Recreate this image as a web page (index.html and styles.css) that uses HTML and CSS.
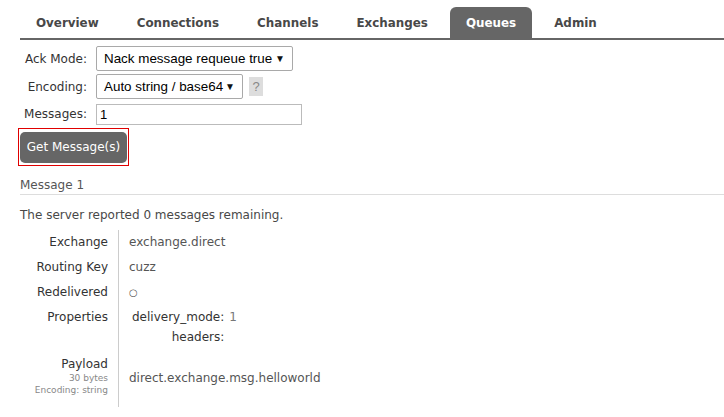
FILE: index.html
```html
<!DOCTYPE html>
<html>
<head>
<meta charset="utf-8">
<link rel="stylesheet" href="styles.css">
</head>
<body>
<div class="tabs">
  <div class="tab">Overview</div>
  <div class="tab">Connections</div>
  <div class="tab">Channels</div>
  <div class="tab">Exchanges</div>
  <div class="tab active">Queues</div>
  <div class="tab">Admin</div>
</div>
<div class="form">
  <label class="lbl">Ack Mode:</label>
  <div class="field"><span class="select sel-ack">Nack message requeue true<span class="arrow">&#9660;</span></span></div>
  <label class="lbl">Encoding:</label>
  <div class="field"><span class="select sel-enc">Auto string / base64<span class="arrow">&#9660;</span></span><span class="help">?</span></div>
  <label class="lbl">Messages:</label>
  <div class="field"><span class="input">1</span></div>
</div>
<div class="btn-wrap"><span class="btn">Get Message(s)</span></div>
<div class="msg-title">Message 1</div>
<p class="remaining">The server reported 0 messages remaining.</p>
<div class="details">
  <div class="k">Exchange</div><div class="v">exchange.direct</div>
  <div class="k">Routing Key</div><div class="v">cuzz</div>
  <div class="k">Redelivered</div><div class="v"><span class="circle">&#9675;</span></div>
  <div class="k">Properties</div>
  <div class="v props">
    <div class="pk">delivery_mode:</div><div class="pv">1</div>
    <div class="pk">headers:</div><div class="pv"></div>
  </div>
  <div class="k payload-k">Payload<small>30 bytes</small><small>Encoding: string</small></div>
  <div class="v payload-v">direct.exchange.msg.helloworld</div>
</div>
</body>
</html>
```
FILE: styles.css
```css
html, body {
  margin: 0;
  padding: 0;
  background: #fff;
  font-family: "DejaVu Sans", Verdana, sans-serif;
  font-size: 12px;
  color: #484848;
}
.tabs {
  display: flex;
  gap: 6px;
  margin-left: 20px;
  padding-top: 7px;
  border-bottom: 2px solid #666;
  height: 31px;
  box-sizing: content-box;
}
.tab {
  padding: 0 16px;
  font-weight: bold;
  font-size: 11.9px;
  color: #484848;
  line-height: 32px;
  height: 31px;
  border-radius: 6px 6px 0 0;
}
.tab.active {
  background: #666;
  color: #fff;
}
.form {
  display: grid;
  grid-template-columns: 67px auto;
  column-gap: 9px;
  row-gap: 3px;
  margin: 6px 0 0 20px;
  align-items: center;
}
.lbl {
  text-align: right;
  color: #333;
  font-size: 12px;
}
.field {
  display: flex;
  align-items: center;
  gap: 6px;
}
.select {
  display: inline-flex;
  align-items: center;
  justify-content: space-between;
  box-sizing: border-box;
  height: 25px;
  border: 1px solid #a9a9a9;
  border-radius: 2px;
  padding: 0 7px 0 7px;
  font-family: "Liberation Sans", Arial, sans-serif;
  font-size: 13.4px;
  white-space: nowrap;
  color: #000;
  background: #fff;
}
.sel-ack { width: 197px; }
.sel-enc { width: 147px; }
.arrow {
  font-size: 10px;
  color: #111;
}
.help {
  display: inline-block;
  width: 14px;
  height: 19px;
  line-height: 19px;
  text-align: center;
  background: #ddd;
  color: #888;
  font-family: "Liberation Sans", Arial, sans-serif;
  font-size: 13px;
}
.input {
  display: block;
  box-sizing: border-box;
  width: 206px;
  height: 21px;
  margin-top: 2px;
  border: 1px solid #bbb;
  padding: 0 3px;
  line-height: 19px;
  font-family: "Liberation Sans", Arial, sans-serif;
  font-size: 13px;
  color: #000;
}
.btn-wrap {
  display: inline-block;
  margin: 3px 0 0 18px;
  padding: 3px 1px 2px 1px;
  border: 1px solid #e00000;
}
.btn {
  display: block;
  width: 107px;
  height: 31px;
  line-height: 31px;
  text-align: center;
  background: #666;
  color: #fff;
  border-radius: 5px;
  font-size: 12px;
}
.msg-title {
  margin: 12px 0 0 20px;
  padding-bottom: 1px;
  border-bottom: 1px solid #ddd;
  color: #555;
  line-height: 15px;
}
.remaining {
  margin: 13px 0 0 20px;
  line-height: 15px;
  color: #484848;
}
.details {
  display: grid;
  grid-template-columns: 99px auto;
  margin: 7px 0 0 20px;
}
.k {
  text-align: right;
  padding: 5px 10px 5px 0;
  border-right: 1px solid #ccc;
  color: #333;
  line-height: 15px;
}
.v {
  padding: 5px 0 5px 10px;
  color: #555;
  line-height: 15px;
}
.circle { font-size: 10px; }
.props {
  display: grid;
  grid-template-columns: auto auto;
  justify-content: start;
  column-gap: 5px;
  row-gap: 5px;
  padding-left: 13px;
}
.pk { text-align: right; color: #333; }
.pv { color: #777; }
.payload-k {
  padding-top: 7px;
  padding-bottom: 11px;
  display: flex;
  flex-direction: column;
}
.payload-k small {
  font-size: 9px;
  color: #888;
  line-height: 12px;
}
.payload-v {
  padding-top: 21px;
}
```
